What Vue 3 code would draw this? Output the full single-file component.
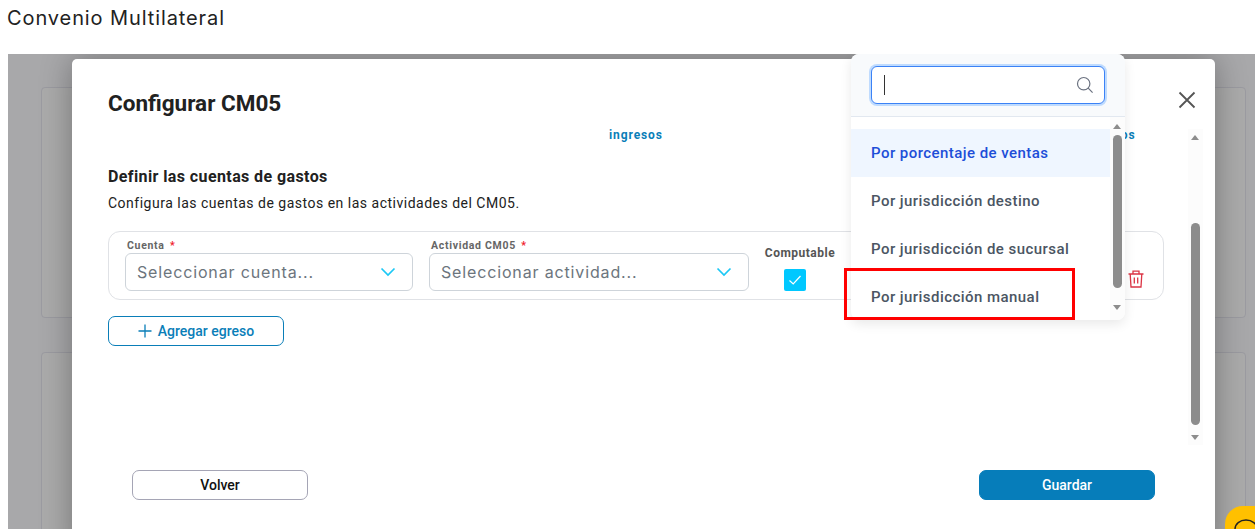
<script setup>
const options = [
    { label: "Por porcentaje de ventas", active: true },
    { label: "Por jurisdicción destino", active: false },
    { label: "Por jurisdicción de sucursal", active: false },
    { label: "Por jurisdicción manual", active: false },
];
</script>
<template>
    <div class="page">
        <header class="top">Convenio Multilateral</header>
        <div class="stage">
            <div class="bg-card"></div>
            <div class="bg-card"></div>

            <div class="modal">
                <div class="modal-head">
                    <h2 class="modal-title">Configurar CM05</h2>
                    <svg class="close" width="20" height="20" viewBox="0 0 20 20">
                        <path d="M2.5 2.5 L17.5 17.5 M17.5 2.5 L2.5 17.5" stroke="#555" stroke-width="1.8" fill="none" />
                    </svg>
                </div>
                <div class="tabs">
                    <span class="tab">ingresos</span>
                    <span class="tab">gastos</span>
                </div>
                <div class="section">
                    <h3 class="section-title">Definir las cuentas de gastos</h3>
                    <p class="section-text">Configura las cuentas de gastos en las actividades del CM05.</p>
                </div>
                <div class="row-box">
                    <div class="field field-account">
                        <label class="label">Cuenta <span class="req">*</span></label>
                        <div class="select">
                            <span>Seleccionar cuenta...</span>
                            <svg width="16" height="10" viewBox="0 0 16 10">
                                <path d="M1.5 1.5 L8 8 L14.5 1.5" stroke="#1cc8f5" stroke-width="1.7" fill="none" />
                            </svg>
                        </div>
                    </div>
                    <div class="field field-activity">
                        <label class="label">Actividad CM05 <span class="req">*</span></label>
                        <div class="select">
                            <span>Seleccionar actividad...</span>
                            <svg width="16" height="10" viewBox="0 0 16 10">
                                <path d="M1.5 1.5 L8 8 L14.5 1.5" stroke="#1cc8f5" stroke-width="1.7" fill="none" />
                            </svg>
                        </div>
                    </div>
                    <div class="computable">
                        <span class="computable-label">Computable</span>
                        <span class="check">
                            <svg width="14" height="12" viewBox="0 0 14 12">
                                <path d="M1.5 6.5 L5.2 10 L12.5 2" stroke="#fff" stroke-width="1.2" fill="none" />
                            </svg>
                        </span>
                    </div>
                    <svg class="trash" width="16" height="18" viewBox="0 0 16 18" fill="none" stroke="#dc3545" stroke-width="1.3">
                        <path d="M0.5 4 H15.5 M5 4 V1.2 H11 V4 M2.2 4 L3 17 H13 L13.8 4 M6.3 7.5 V13.5 M9.7 7.5 V13.5" />
                    </svg>
                </div>
                <button class="add-btn">
                    <svg width="14" height="14" viewBox="0 0 14 14">
                        <path d="M7 0.5 V13.5 M0.5 7 H13.5" stroke="#0a7eb8" stroke-width="1.3" fill="none" />
                    </svg>
                    Agregar egreso
                </button>
                <div class="actions">
                    <button class="btn btn-back">Volver</button>
                    <button class="btn btn-save">Guardar</button>
                </div>
                <div class="scrollbar modal-scroll">
                    <span class="arrow-up"></span>
                    <span class="thumb"></span>
                    <span class="arrow-down"></span>
                </div>
            </div>

            <div class="dropdown">
                <div class="search-area">
                    <div class="search">
                        <span class="caret"></span>
                        <svg width="18" height="18" viewBox="0 0 18 18" fill="none" stroke="#6b7280" stroke-width="1.2">
                            <circle cx="7.7" cy="7.7" r="6.2" />
                            <path d="M12.2 12.2 L16.6 16.6" />
                        </svg>
                    </div>
                </div>
                <ul class="options">
                    <li v-for="option in options" :key="option.label" class="option" :class="{ active: option.active }">
                        {{ option.label }}
                    </li>
                </ul>
                <div class="scrollbar drop-scroll">
                    <span class="arrow-up"></span>
                    <span class="thumb"></span>
                    <span class="arrow-down"></span>
                </div>
            </div>

            <div class="highlight"></div>

            <div class="chat">
                <svg width="30" height="23" viewBox="0 0 30 23" fill="none" stroke="#222" stroke-width="1.4">
                    <ellipse cx="21" cy="23" rx="11" ry="9" />
                </svg>
            </div>
        </div>
    </div>
</template>
<style scoped>
.page {
    height: 529px;
    overflow: hidden;
    font-family: Roboto, "Liberation Sans", sans-serif;
}

.top {
    height: 54px;
    box-sizing: border-box;
    padding: 5px 0 0 7px;
    font-family: Inter, sans-serif;
    font-size: 20px;
    line-height: 26px;
    letter-spacing: 0.9px;
    color: #222;
}

.stage {
    position: relative;
    height: 475px;
    margin-left: 8px;
    padding: 33px 9px 0 33px;
    box-sizing: border-box;
    display: flex;
    flex-direction: column;
    gap: 34px;
    overflow: hidden;
    background: #a8a8aa;
}

.bg-card {
    height: 231px;
    flex-shrink: 0;
    box-sizing: border-box;
    background: #ababab;
    border: 1px solid #9b9ba1;
    border-radius: 4px;
}

.modal {
    position: absolute;
    left: 64px;
    top: 5px;
    width: 1143px;
    height: 500px;
    box-sizing: border-box;
    padding: 30px 51px 0 36px;
    background: #fff;
    border-radius: 5px;
    box-shadow: 0 0 32px rgba(0, 0, 0, 0.32);
}

.modal-head {
    display: flex;
    justify-content: space-between;
    align-items: center;
    height: 30px;
}

.modal-title {
    margin: -2px 0 0;
    font-size: 22.5px;
    font-weight: 700;
    line-height: 30px;
    color: #212121;
}

.close {
    margin-right: -33px;
    margin-top: -8px;
}

.tabs {
    display: flex;
    margin-top: 8px;
    padding-left: 501px;
    gap: 431px;
    height: 16px;
}

.tab {
    font-size: 12px;
    font-weight: 700;
    line-height: 16px;
    letter-spacing: 0.9px;
    color: #0a7eb8;
}

.section {
    margin-top: 24px;
}

.section-title {
    margin: 0;
    font-size: 16px;
    font-weight: 700;
    line-height: 20px;
    letter-spacing: 0.4px;
    color: #212121;
}

.section-text {
    margin: 7px 0 0;
    font-size: 14px;
    line-height: 18px;
    letter-spacing: 0.5px;
    color: #212121;
}

.row-box {
    display: flex;
    align-items: flex-start;
    height: 69px;
    margin-top: 19px;
    box-sizing: border-box;
    padding: 7px 0 0 16px;
    border: 1px solid #e0e2e6;
    border-radius: 12px;
}

.field-account {
    width: 288px;
    margin-right: 16px;
}

.field-activity {
    width: 320px;
    margin-right: 16px;
}

.label {
    display: block;
    height: 14px;
    padding-left: 2px;
    font-size: 10.5px;
    font-weight: 700;
    line-height: 14px;
    letter-spacing: 0.7px;
    color: #666;
}

.req {
    color: #f01c2c;
    margin-left: 2px;
}

.select {
    display: flex;
    justify-content: space-between;
    align-items: center;
    height: 38px;
    box-sizing: border-box;
    padding: 0 16px 0 11px;
    border: 1px solid #ced4da;
    border-radius: 6px;
    font-family: Inter, sans-serif;
    font-size: 16px;
    letter-spacing: 0.85px;
    color: #6c757d;
}

.computable {
    display: flex;
    flex-direction: column;
    align-items: center;
    width: 70px;
    margin-top: 6px;
}

.computable-label {
    font-size: 12px;
    font-weight: 700;
    line-height: 16px;
    letter-spacing: 0.5px;
    color: #555;
}

.check {
    display: flex;
    align-items: center;
    justify-content: center;
    width: 22px;
    height: 22px;
    margin-top: 8px;
    margin-right: 10px;
    background: #00c8ff;
    border-radius: 2px;
}

.trash {
    margin: 31px 0 0 293px;
}

.add-btn {
    display: flex;
    align-items: center;
    justify-content: center;
    gap: 6px;
    width: 176px;
    height: 30px;
    margin-top: 16px;
    padding: 0;
    background: #fff;
    border: 1px solid #0a7eb8;
    border-radius: 7px;
    font-family: inherit;
    font-size: 14px;
    font-weight: 500;
    color: #0a7eb8;
}

.actions {
    display: flex;
    justify-content: space-between;
    margin-top: 124px;
    padding: 0 9px 0 24px;
}

.btn {
    width: 176px;
    height: 30px;
    padding: 0;
    border-radius: 7px;
    font-family: inherit;
    font-size: 14px;
    font-weight: 500;
}

.btn-back {
    background: #fff;
    border: 1px solid #a5a5b5;
    color: #111;
}

.btn-save {
    background: #067dba;
    border: 1px solid #067dba;
    color: #fff;
}

.scrollbar {
    position: absolute;
    width: 15px;
    background: #fcfcfc;
}

.arrow-up,
.arrow-down {
    position: absolute;
    left: 3px;
    width: 0;
    height: 0;
    border-left: 4.5px solid transparent;
    border-right: 4.5px solid transparent;
}

.arrow-up {
    top: 6px;
    border-bottom: 5px solid #8c8c8c;
}

.arrow-down {
    bottom: 5px;
    border-top: 5px solid #8c8c8c;
}

.thumb {
    position: absolute;
    left: 3px;
    width: 9px;
    background: #8c8c8c;
    border-radius: 5px;
}

.modal-scroll {
    left: 1116px;
    top: 70px;
    height: 316px;
}

.modal-scroll .thumb {
    top: 94px;
    height: 202px;
}

.dropdown {
    position: absolute;
    left: 843px;
    top: 0;
    width: 274px;
    height: 266px;
    background: #fff;
    border-radius: 8px;
    box-shadow: 0 4px 12px rgba(0, 0, 0, 0.09);
    overflow: hidden;
}

.search-area {
    height: 63px;
    box-sizing: border-box;
    padding: 12px 20px 0;
    background: #f8fafc;
    border-bottom: 1px solid #e2e8f0;
}

.search {
    display: flex;
    justify-content: space-between;
    align-items: center;
    height: 38px;
    box-sizing: border-box;
    padding: 0 10px 0 12px;
    background: #fff;
    border: 1px solid #3b82f6;
    border-radius: 6px;
    box-shadow: 0 0 0 2px #bfdbfe;
}

.caret {
    width: 1px;
    height: 20px;
    background: #333;
}

.options {
    margin: 0;
    padding: 12px 15px 0 0;
    list-style: none;
}

.option {
    height: 48px;
    padding-left: 20px;
    font-size: 15px;
    font-weight: 500;
    line-height: 49px;
    letter-spacing: 0.45px;
    color: #4b5563;
}

.option.active {
    background: #eff6ff;
    color: #1d4ed8;
}

.drop-scroll {
    left: 259px;
    top: 63px;
    bottom: 0;
}

.drop-scroll .arrow-up {
    top: 7px;
}

.drop-scroll .arrow-down {
    bottom: 10px;
}

.drop-scroll .thumb {
    top: 18px;
    height: 153px;
}

.highlight {
    position: absolute;
    left: 836px;
    top: 214px;
    width: 231px;
    height: 52px;
    box-sizing: border-box;
    border: 3px solid #f00;
}

.chat {
    position: absolute;
    left: 1217px;
    top: 452px;
    width: 60px;
    height: 60px;
    background: #ffc000;
    border-radius: 18px;
}

.chat svg {
    display: block;
}
</style>
<style>
html,
body {
    background: #fff;
}
</style>
